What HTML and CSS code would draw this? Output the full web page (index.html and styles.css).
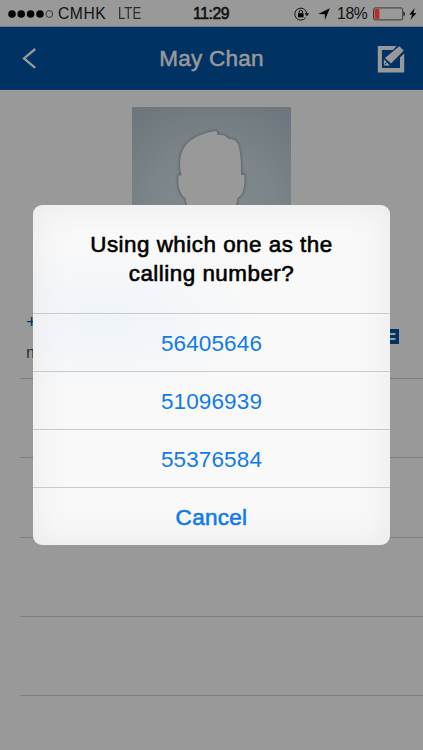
FILE: index.html
```html
<!DOCTYPE html>
<html lang="en">
<head>
<meta charset="utf-8">
<title>May Chan</title>
<link rel="stylesheet" href="styles.css">
</head>
<body>
<div class="screen">
  <header class="status">
    <div class="carrier">
      <svg class="signal" width="46" height="10" viewBox="0 0 46 10"><circle cx="4" cy="5" r="3.8"/><circle cx="13.2" cy="5" r="3.8"/><circle cx="22.6" cy="5" r="3.8"/><circle cx="32" cy="5" r="3.8"/><circle cx="41.3" cy="5" r="3.4" fill="none" stroke="#111" stroke-width=".7"/></svg>
      <span class="operator">CMHK</span>
      <span class="network">LTE</span>
    </div>
    <span class="clock">11:29</span>
    <div class="indicators">
      <svg class="lock" width="16" height="14" viewBox="0 0 16 14"><path d="M11.6 10.7A6 6 0 1 1 12.7 6.2" fill="none" stroke="#111" stroke-width="1"/><path d="M10.6 6.2h4.6l-2.3 3z"/><path d="M4 6.2h5.6v4.1H4z"/><path d="M5.1 6.3V5a1.7 1.7 0 0 1 3.4 0v1.3" fill="none" stroke="#111" stroke-width="1"/></svg>
      <svg class="arrow" width="12" height="12" viewBox="0 0 12 12"><path d="M11.8.2 6.9 12V6.2L.2 5.9z"/></svg>
      <span class="percent">18%</span>
      <svg class="battery" width="33" height="14" viewBox="0 0 33 14"><rect x=".5" y=".9" width="29.2" height="12" rx="1.8" fill="none" stroke="#222" stroke-width=".8"/><path d="M1.6 2h4.8v9.8H1.6z" fill="#bd2c24"/><path d="M30.5 4.8c1.8.3 1.8 4 0 4.3z"/></svg>
      <svg class="bolt" width="8" height="12" viewBox="0 0 8 12"><path d="M5.7 0 .3 6.5h2.8L1.5 11.8l6-6.9H4.4z"/></svg>
    </div>
  </header>
  <nav class="nav">
    <svg class="back" width="15" height="21" viewBox="0 0 15 21"><path d="M13.2 1 2 10.4 13.2 19.9" fill="none" stroke="#999" stroke-width="2.3"/></svg>
    <h1>May Chan</h1>
    <svg class="edit" width="28" height="28" viewBox="0 0 28 28"><path d="M.8 1h18.8L16 4.9H4.9v18.1h18.1V12.5l4.2-4V27.5H.8z"/><path d="m22.3 1.3 4.5 4.3L14 18.6l-6.1-5.5z"/><path d="M6.9 14.3 13 20.5H6.9z"/><path d="m7.8 19.2 1.7-1.7" stroke="#003264" stroke-width="1"/></svg>
  </nav>
  <main>
    <svg class="avatar" width="159" height="159" viewBox="0 0 159 159">
      <defs>
        <radialGradient id="backdrop" cx=".5" cy=".65" r=".75"><stop offset="0" stop-color="#848c8f"/><stop offset=".55" stop-color="#7b8488"/><stop offset="1" stop-color="#6d777d"/></radialGradient>
        <filter id="soft"><feGaussianBlur stdDeviation="1"/></filter>
        <path id="head" d="M49.5 68.5C46 53 49 41 58 34c8-6 17-9 26.5-10l1 4c5 0 8 0 11 4 7 0 10 4 10.5 9 2 8 2 17 2 27h3.5c0 10 0 19-7 23-3 20-15 37-27 37S57 111 53.5 91c-6-4-8-13-7-22.5z"/>
      </defs>
      <path d="M0 0h159v159H0z" fill="url(#backdrop)"/>
      <use href="#head" fill="none" stroke="#5d666b" stroke-width="2.5" filter="url(#soft)"/>
      <use href="#head" fill="#999"/>
    </svg>
    <section class="contact">
      <div class="phone"><span>+</span><small>mobile</small></div>
      <svg class="message" width="27" height="15" viewBox="0 0 27 15"><path d="M0 0h27v15H0z" fill="#003264"/><path d="M6 5h17.5M6 10h17.5" stroke="#999" stroke-width="2"/></svg>
    </section>
    <div class="row"></div><div class="row"></div><div class="row"></div><div class="row"></div>
  </main>
  <section class="dialog" role="dialog">
    <h2>Using which one as the<br>calling number?</h2>
    <button>56405646</button>
    <button>51096939</button>
    <button>55376584</button>
    <button class="cancel">Cancel</button>
  </section>
</div>
</body>
</html>
```
FILE: styles.css
```css
* { box-sizing: border-box; }
body { margin: 0; font-family: "Liberation Sans", Arial, sans-serif; }
svg { display: block; flex: none; fill: #050505; }
.screen { position: relative; width: 423px; height: 750px; overflow: hidden; background: #999; }
.status { height: 27px; display: grid; grid-template-columns: 193px 1fr auto; align-items: center; font-size: 15.7px; line-height: 27px; color: #111; border-bottom: 1px solid #6d7c90; }
.carrier, .indicators { display: flex; align-items: center; }
.carrier { padding-left: 8px; }
.operator { margin-left: 4px; width: 60px; letter-spacing: .5px; }
.network { transform: scaleX(.84); transform-origin: left; color: #2b2b2b; }
.clock { letter-spacing: -.4px; -webkit-text-stroke: .6px #111; }
.indicators { padding-right: 6px; }
.arrow { margin-left: 8px; }
.percent { margin-left: 7px; width: 32px; letter-spacing: -.3px; }
.battery { margin-left: 4px; }
.bolt { margin-left: 3px; }
.nav { height: 63px; display: flex; align-items: center; justify-content: space-between; padding: 0 18px 0 22px; background: #003264; }
.nav h1 { margin: 0 0 0 9px; font-size: 22.5px; line-height: 26px; font-weight: 400; letter-spacing: .25px; color: #999; -webkit-text-stroke: .55px #999; }
.edit { fill: #999; }
main { padding-top: 17px; border-top: 1px solid #a3a09e; }
.avatar { margin-left: 132px; margin-top: -1px; }
.contact { height: 113px; margin-left: 20px; padding: 43px 24.5px 0 6px; display: flex; justify-content: space-between; border-bottom: 1px solid #7d7d7d; }
.phone span, .phone small { display: block; font-size: 19px; line-height: 25px; color: #003264; }
.phone small { margin-top: 8px; font-size: 17px; line-height: 22px; color: #333; }
.message { margin-top: 20px; }
.row { height: 79.25px; margin-left: 20px; border-bottom: 1px solid #7d7d7d; }
.dialog { position: absolute; left: 33px; top: 205px; width: 357px; height: 340px; border-radius: 9px; overflow: hidden; background: radial-gradient(ellipse 160px 75px at 70px 115px, #eff4fa 0, #f9f9f900 100%), #f9f9f9; box-shadow: inset 0 0 36px #e9e9ea; }
.dialog h2 { height: 108px; margin: 0; padding-top: 25px; font-size: 22.4px; line-height: 29px; font-weight: 400; letter-spacing: .5px; text-align: center; color: #000; -webkit-text-stroke: .6px #000; }
.dialog button { display: block; width: 100%; height: 58px; padding: 2px 0 0; border: 0; border-top: 1px solid #c7cacf; background: none; font: 22.5px "Liberation Sans", Arial, sans-serif; letter-spacing: .12px; color: #127be9; }
.dialog .cancel { letter-spacing: .3px; -webkit-text-stroke: .6px #127be9; }
```
